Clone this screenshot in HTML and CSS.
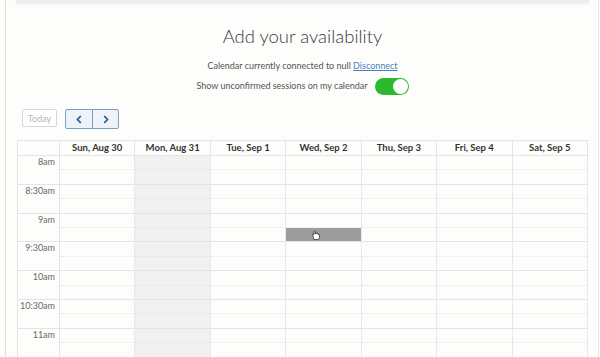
FILE: index.html
```html
<!DOCTYPE html>
<html lang="en">

<head>
    <meta charset="UTF-8">
    <meta name="viewport" content="width=device-width, initial-scale=1.0">
    <title>Add your availability</title>
    <link rel="stylesheet" href="styles.css">
</head>

<body>
    <div class="page">
        <div class="top-card"></div>

        <h1>Add your availability</h1>
        <p class="connected">Calendar currently connected to null <a href="#">Disconnect</a></p>
        <p class="toggle-row">Show unconfirmed sessions on my calendar <span class="toggle on"><span class="knob"></span></span></p>

        <!-- Toolbar -->
        <div class="toolbar">
            <button class="btn-today">Today</button>
            <div class="btn-group">
                <button class="btn-nav" aria-label="Previous week">
                    <svg width="6" height="9" viewBox="0 0 6 9"><path d="M4.8 1 1.5 4.5 4.8 8" fill="none" stroke="#2c5d93" stroke-width="1.8"/></svg>
                </button>
                <button class="btn-nav" aria-label="Next week">
                    <svg width="6" height="9" viewBox="0 0 6 9"><path d="M1.2 1 4.5 4.5 1.2 8" fill="none" stroke="#2c5d93" stroke-width="1.8"/></svg>
                </button>
            </div>
        </div>

        <!-- Week calendar -->
        <div class="calendar" id="calendar">
            <div class="cal-head"></div>
            <div class="cal-head">Sun, Aug 30</div>
            <div class="cal-head">Mon, Aug 31</div>
            <div class="cal-head">Tue, Sep 1</div>
            <div class="cal-head">Wed, Sep 2</div>
            <div class="cal-head">Thu, Sep 3</div>
            <div class="cal-head">Fri, Sep 4</div>
            <div class="cal-head">Sat, Sep 5</div>
        </div>
    </div>

    <script>
        // Build the time slots of the week
        const times = ["8am", "8:30am", "9am", "9:30am", "10am", "10:30am", "11am"];
        const calendar = document.getElementById("calendar");

        times.forEach(function (time, row) {
            const label = document.createElement("div");
            label.className = "time";
            label.textContent = time;
            calendar.appendChild(label);

            for (let day = 0; day < 7; day++) {
                const slot = document.createElement("div");
                slot.className = day === 1 ? "slot blocked" : "slot";

                for (let q = 0; q < 2; q++) {
                    const quarter = document.createElement("div");
                    quarter.className = "quarter";
                    // Selected slot: Wed, 9:15am
                    if (row === 2 && day === 3 && q === 1) {
                        quarter.classList.add("selected");
                        quarter.innerHTML = '<svg class="cursor" width="8" height="10" viewBox="0 0 8 10"><path d="M2 9.5 1 6.5V4.2l1 .3V1.3a.7.7 0 0 1 1.3 0V4l.2-1a.7.7 0 0 1 1.2.1V4l.3-.6a.7.7 0 0 1 1.2.2V5l.2-.3a.6.6 0 0 1 1.1.3v2.3L6.6 9.5Z" fill="#fff" stroke="#222" stroke-width=".7"/></svg>';
                    }
                    slot.appendChild(quarter);
                }
                calendar.appendChild(slot);
            }
        });
    </script>
</body>

</html>
```

FILE: styles.css
```css
body {
    margin: 0;
    background-color: #fdfdfc;
    font-family: Lato, "Open Sans", sans-serif;
    color: #444;
}

.page {
    margin: 0 1px 0 5px;
    min-height: 357px;
    padding: 0 10px 0 11px;
    border-left: 1px solid #e0e0e0;
    border-right: 1px solid #e6e6e6;
    box-sizing: border-box;
}

.top-card {
    height: 3px;
    margin: 0 -1px;
    background-color: #ededed;
    box-shadow: 0 1px 3px rgba(0, 0, 0, 0.08);
}

h1 {
    margin: 21px 0 0;
    font-size: 18.5px;
    line-height: 24px;
    font-weight: 300;
    text-align: center;
    color: #3a3a3a;
}

.connected,
.toggle-row {
    margin: 0;
    font-size: 9px;
    text-align: center;
    color: #555;
}

.connected {
    margin-top: 11px;
    line-height: 14px;
}

.connected a {
    color: #4a7fc0;
}

.toggle-row {
    margin-top: 4px;
    line-height: 18px;
    display: flex;
    justify-content: center;
    align-items: center;
    gap: 7px;
}

.toggle {
    display: inline-flex;
    align-items: center;
    justify-content: flex-end;
    width: 34px;
    height: 17px;
    padding: 1px;
    box-sizing: border-box;
    border-radius: 9px;
    background-color: #2db92d;
}

.knob {
    width: 15px;
    height: 15px;
    border-radius: 50%;
    background-color: #fff;
}

/* Toolbar */
.toolbar {
    display: flex;
    gap: 8px;
    margin: 14px 0 0 5px;
}

.toolbar button {
    height: 18px;
    margin: 0;
    padding: 0;
    font-family: Lato, sans-serif;
    cursor: pointer;
}

.btn-today {
    width: 35px;
    border: 1px solid #d6d6d6;
    border-radius: 2px;
    background-color: #fff;
    color: #b8b8b8;
    font-size: 9px;
}

.btn-group {
    display: flex;
    border: 1px solid #7c9fc6;
    border-radius: 2px;
    background-color: #eef3f9;
}

.btn-nav {
    width: 26px;
    border: none;
    background: none;
    display: flex;
    align-items: center;
    justify-content: center;
}

.btn-nav + .btn-nav {
    border-left: 1px solid #7c9fc6;
}

/* Calendar */
.calendar {
    display: grid;
    grid-template-columns: 42px repeat(7, 1fr);
    margin-top: 11px;
    border-top: 1px solid #e4e4e4;
    border-left: 1px solid #e4e4e4;
}

.cal-head {
    height: 14px;
    line-height: 13px;
    border-right: 1px solid #e4e4e4;
    border-bottom: 1px solid #e4e4e4;
    font-size: 9.5px;
    font-weight: bold;
    text-align: center;
    color: #333;
}

.time {
    height: 27.8px;
    padding-right: 4px;
    border-right: 1px solid #e4e4e4;
    border-bottom: 1px solid #e4e4e4;
    font-size: 9px;
    line-height: 12px;
    text-align: right;
    color: #6a6a6a;
}

.slot {
    border-right: 1px solid #e8e8e8;
    border-bottom: 1px solid #e4e4e4;
}

.slot.blocked {
    background-color: #f1f1f1;
}

.quarter {
    height: 13.4px;
}

.quarter:first-child {
    border-bottom: 1px dotted #e6e6e6;
}

.quarter.selected {
    display: flex;
    align-items: center;
    justify-content: center;
    background-color: #9d9d9d;
}

.cursor {
    margin-left: -14px;
}
```
